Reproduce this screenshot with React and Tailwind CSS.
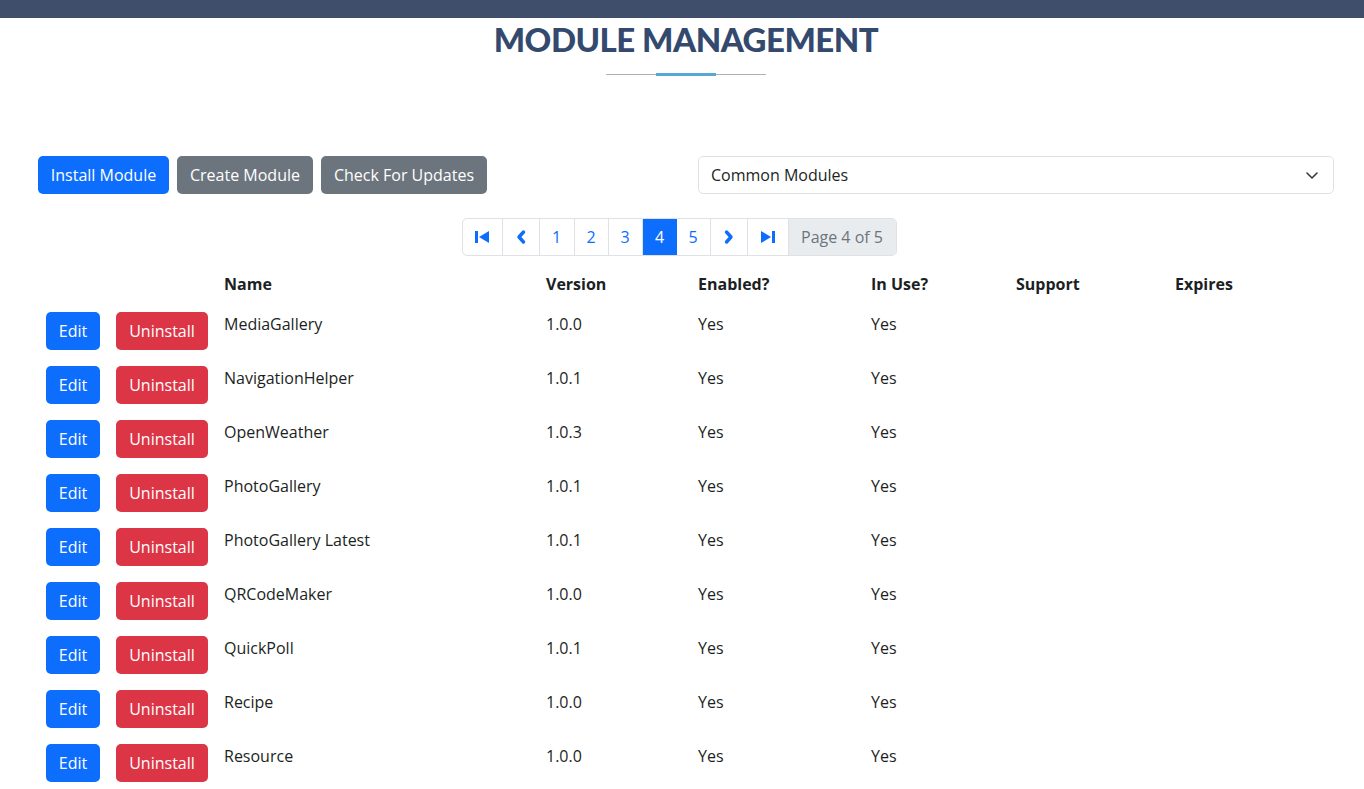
import React from "react";

const rows = [
  ["MediaGallery", "1.0.0"],
  ["NavigationHelper", "1.0.1"],
  ["OpenWeather", "1.0.3"],
  ["PhotoGallery", "1.0.1"],
  ["PhotoGallery Latest", "1.0.1"],
  ["QRCodeMaker", "1.0.0"],
  ["QuickPoll", "1.0.1"],
  ["Recipe", "1.0.0"],
  ["Resource", "1.0.0"],
];

function FirstIcon() {
  return (
    <svg width="16" height="14" viewBox="0 0 16 14" fill="#0d6efd">
      <rect x="1" y="1" width="3" height="12" />
      <path d="M15 1 L15 13 L5 7 Z" />
    </svg>
  );
}
function LastIcon() {
  return (
    <svg width="16" height="14" viewBox="0 0 16 14" fill="#0d6efd">
      <rect x="12" y="1" width="3" height="12" />
      <path d="M1 1 L1 13 L11 7 Z" />
    </svg>
  );
}
function PrevIcon() {
  return (
    <svg width="12" height="16" viewBox="0 0 12 16" fill="none" stroke="#0d6efd" strokeWidth="3.4" strokeLinecap="round" strokeLinejoin="round">
      <path d="M8.5 3 L4 8 L8.5 13" />
    </svg>
  );
}
function NextIcon() {
  return (
    <svg width="12" height="16" viewBox="0 0 12 16" fill="none" stroke="#0d6efd" strokeWidth="3.4" strokeLinecap="round" strokeLinejoin="round">
      <path d="M3.5 3 L8 8 L3.5 13" />
    </svg>
  );
}

export default function App() {
  const font = { fontFamily: '"Open Sans", "Liberation Sans", sans-serif' };
  return (
    <div className="min-h-screen bg-white text-[#1c1f23]" style={font}>
      <div className="h-[18px] bg-[#3f4f6b]" />
      <div className="flex flex-col items-center pl-[8px]">
        <h1
          className="mt-[4px] text-[33px] leading-[34px] font-black tracking-[-0.5px] text-[#34496e]"
          style={{ fontFamily: 'Lato, "Liberation Sans", sans-serif' }}
        >
          MODULE MANAGEMENT
        </h1>
        <div className="relative mt-[17px] h-[3px] w-[160px]">
          <div className="absolute left-0 right-0 top-[1px] h-px bg-[#b0b0b0]" />
          <div className="absolute left-[50px] top-0 h-[3px] w-[60px] bg-[#58a8d1]" />
        </div>
      </div>

      <div className="ml-[38px] w-[1296px]">
        <div className="mt-[80px] flex items-center justify-between">
          <div className="flex gap-[8px]">
            <button className="h-[38px] w-[131px] rounded-[5px] bg-[#0d6efd] text-[16px] text-white">Install Module</button>
            <button className="h-[38px] w-[136px] rounded-[5px] bg-[#6c757d] text-[16px] text-white">Create Module</button>
            <button className="h-[38px] w-[166px] rounded-[5px] bg-[#6c757d] text-[16px] text-white">Check For Updates</button>
          </div>
          <div className="flex h-[38px] w-[636px] items-center justify-between rounded-[5px] border border-[#dee2e6] pl-[12px] pr-[14px] text-[16px]">
            <span>Common Modules</span>
            <svg width="14" height="10" viewBox="0 0 14 10" fill="none" stroke="#343a40" strokeWidth="1.6" strokeLinecap="round" strokeLinejoin="round">
              <path d="M2 3 L7 8 L12 3" />
            </svg>
          </div>
        </div>

        <div className="mt-[24px] flex justify-center">
          <div className="ml-[-14px] flex h-[38px] overflow-hidden rounded-[5px] border border-[#dee2e6] text-[16px]">
            <div className="flex w-[40px] items-center justify-center border-r border-[#dee2e6]"><FirstIcon /></div>
            <div className="flex w-[37px] items-center justify-center border-r border-[#dee2e6]"><PrevIcon /></div>
            <div className="flex w-[35px] items-center justify-center border-r border-[#dee2e6] text-[#0d6efd]">1</div>
            <div className="flex w-[34px] items-center justify-center border-r border-[#dee2e6] text-[#0d6efd]">2</div>
            <div className="flex w-[34px] items-center justify-center border-r border-[#dee2e6] text-[#0d6efd]">3</div>
            <div className="flex w-[34px] items-center justify-center bg-[#0d6efd] text-white">4</div>
            <div className="flex w-[34px] items-center justify-center border-r border-[#dee2e6] text-[#0d6efd]">5</div>
            <div className="flex w-[37px] items-center justify-center border-r border-[#dee2e6]"><NextIcon /></div>
            <div className="flex w-[41px] items-center justify-center border-r border-[#dee2e6]"><LastIcon /></div>
            <div className="flex w-[107px] items-center justify-center bg-[#e9ecef] text-[#6c757d]">Page 4 of 5</div>
          </div>
        </div>

        <table className="mt-[8px] w-[1296px] table-fixed border-collapse text-[16px]">
          <colgroup>
            <col className="w-[70px]" />
            <col className="w-[108px]" />
            <col className="w-[322px]" />
            <col className="w-[152px]" />
            <col className="w-[173px]" />
            <col className="w-[145px]" />
            <col className="w-[159px]" />
            <col />
          </colgroup>
          <thead>
            <tr className="text-left font-bold">
              <th className="p-[8px] leading-[24px]"></th>
              <th className="p-[8px] leading-[24px]"></th>
              <th className="p-[8px] leading-[24px]">Name</th>
              <th className="p-[8px] leading-[24px]">Version</th>
              <th className="p-[8px] leading-[24px]">Enabled?</th>
              <th className="p-[8px] leading-[24px]">In Use?</th>
              <th className="p-[8px] leading-[24px]">Support</th>
              <th className="p-[8px] leading-[24px]">Expires</th>
            </tr>
          </thead>
          <tbody>
            {rows.map(([name, ver]) => (
              <tr key={name} className="align-top">
                <td className="p-[8px]">
                  <button className="h-[38px] w-[54px] rounded-[5px] bg-[#0d6efd] text-[16px] text-white">Edit</button>
                </td>
                <td className="p-[8px]">
                  <button className="h-[38px] w-[92px] rounded-[5px] bg-[#dc3545] text-[16px] text-white">Uninstall</button>
                </td>
                <td className="p-[8px] leading-[24px]">{name}</td>
                <td className="p-[8px] leading-[24px]">{ver}</td>
                <td className="p-[8px] leading-[24px]">Yes</td>
                <td className="p-[8px] leading-[24px]">Yes</td>
                <td className="p-[8px] leading-[24px]"></td>
                <td className="p-[8px] leading-[24px]"></td>
              </tr>
            ))}
          </tbody>
        </table>
      </div>
    </div>
  );
}
